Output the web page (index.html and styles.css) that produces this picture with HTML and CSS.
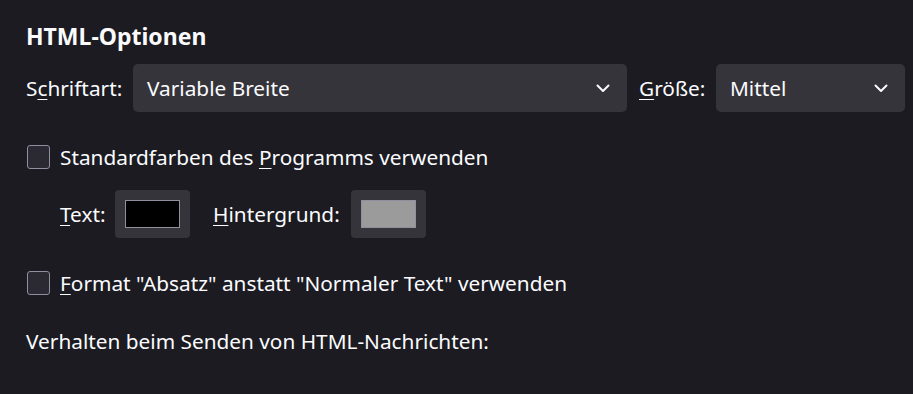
FILE: index.html
```html
<!DOCTYPE html>
<html lang="de">
<head>
  <meta charset="UTF-8" />
  <title>HTML-Optionen</title>
  <link rel="stylesheet" href="styles.css">
</head>
<body>
  <section class="options">
    <h2 class="options-title">HTML-Optionen</h2>

    <div class="font-row">
      <label class="field-label label-font">S<u>c</u>hriftart:</label>
      <div class="select select-wide">
        <span>Variable Breite</span>
        <svg class="chevron" viewBox="0 0 14 9" width="14" height="9"><path d="M1.5 1.5 7 7l5.5-5.5" fill="none" stroke="currentColor" stroke-width="2" stroke-linecap="round" stroke-linejoin="round"/></svg>
      </div>
      <label class="field-label label-size"><u>G</u>röße:</label>
      <div class="select select-size">
        <span>Mittel</span>
        <svg class="chevron" viewBox="0 0 14 9" width="14" height="9"><path d="M1.5 1.5 7 7l5.5-5.5" fill="none" stroke="currentColor" stroke-width="2" stroke-linecap="round" stroke-linejoin="round"/></svg>
      </div>
    </div>

    <label class="check-row">
      <span class="checkbox"></span>
      <span>Standardfarben des <u>P</u>rogramms verwenden</span>
    </label>

    <div class="color-row">
      <span class="field-label label-text"><u>T</u>ext:</span>
      <span class="color-btn"><span class="swatch swatch-text"></span></span>
      <span class="field-label label-bg"><u>H</u>intergrund:</span>
      <span class="color-btn"><span class="swatch swatch-bg"></span></span>
    </div>

    <label class="check-row check-format">
      <span class="checkbox"></span>
      <span><u>F</u>ormat "Absatz" anstatt "Normaler Text" verwenden</span>
    </label>

    <p class="send-note">Verhalten beim Senden von HTML-Nachrichten:</p>
  </section>
</body>
</html>
```

FILE: styles.css
```css
html, body {
  margin: 0; padding: 0;
  background: #1c1b22;
  color: #fbfbfe;
  font-family: "Noto Sans", "Open Sans", sans-serif;
  font-size: 20.8px;
  height: 100%;
  overflow: hidden;
}
u {
  text-decoration-thickness: 1px;
  text-underline-offset: 3px;
}
.options {
  padding: 20px 0 0 26px;
}
.options-title {
  margin: 0;
  font-size: 23px;
  font-weight: 700;
  line-height: 32px;
}
.font-row {
  display: flex;
  align-items: center;
  gap: 12px;
  margin-top: 12px;
}
.field-label {
  white-space: nowrap;
  flex-shrink: 0;
}
.label-font { width: 95px; }
.label-size { width: 65px; }
.label-text { width: 44px; }
.label-bg { width: 127px; }
.select {
  display: flex;
  align-items: center;
  justify-content: space-between;
  height: 48px;
  box-sizing: border-box;
  padding: 0 17px 0 14px;
  background: #35343b;
  border-radius: 5px;
  flex-shrink: 0;
}
.select-wide {
  width: 494px;
}
.select-size {
  width: 189px;
}
.chevron {
  color: #fbfbfe;
}
.check-row {
  display: flex;
  align-items: center;
  gap: 10px;
  margin-top: 31px;
  padding-left: 1px;
}
.checkbox {
  width: 23px;
  height: 24px;
  box-sizing: border-box;
  border: 1px solid #8f8f9d;
  border-radius: 3px;
  background: #2b2a33;
}
.color-row {
  display: flex;
  align-items: center;
  gap: 11px;
  margin-top: 19px;
  padding-left: 34px;
}
.color-btn {
  display: flex;
  align-items: center;
  justify-content: center;
  width: 75px;
  height: 48px;
  background: #35343b;
  border-radius: 4px;
  margin-right: 12px;
}
.swatch {
  width: 53px;
  height: 26px;
  border: 1px solid #8f8f9d;
}
.swatch-text {
  background: #000;
}
.swatch-bg {
  background: #9b9b9b;
}
.check-format {
  margin-top: 31px;
}
.send-note {
  margin: 30px 0 0;
}
```
